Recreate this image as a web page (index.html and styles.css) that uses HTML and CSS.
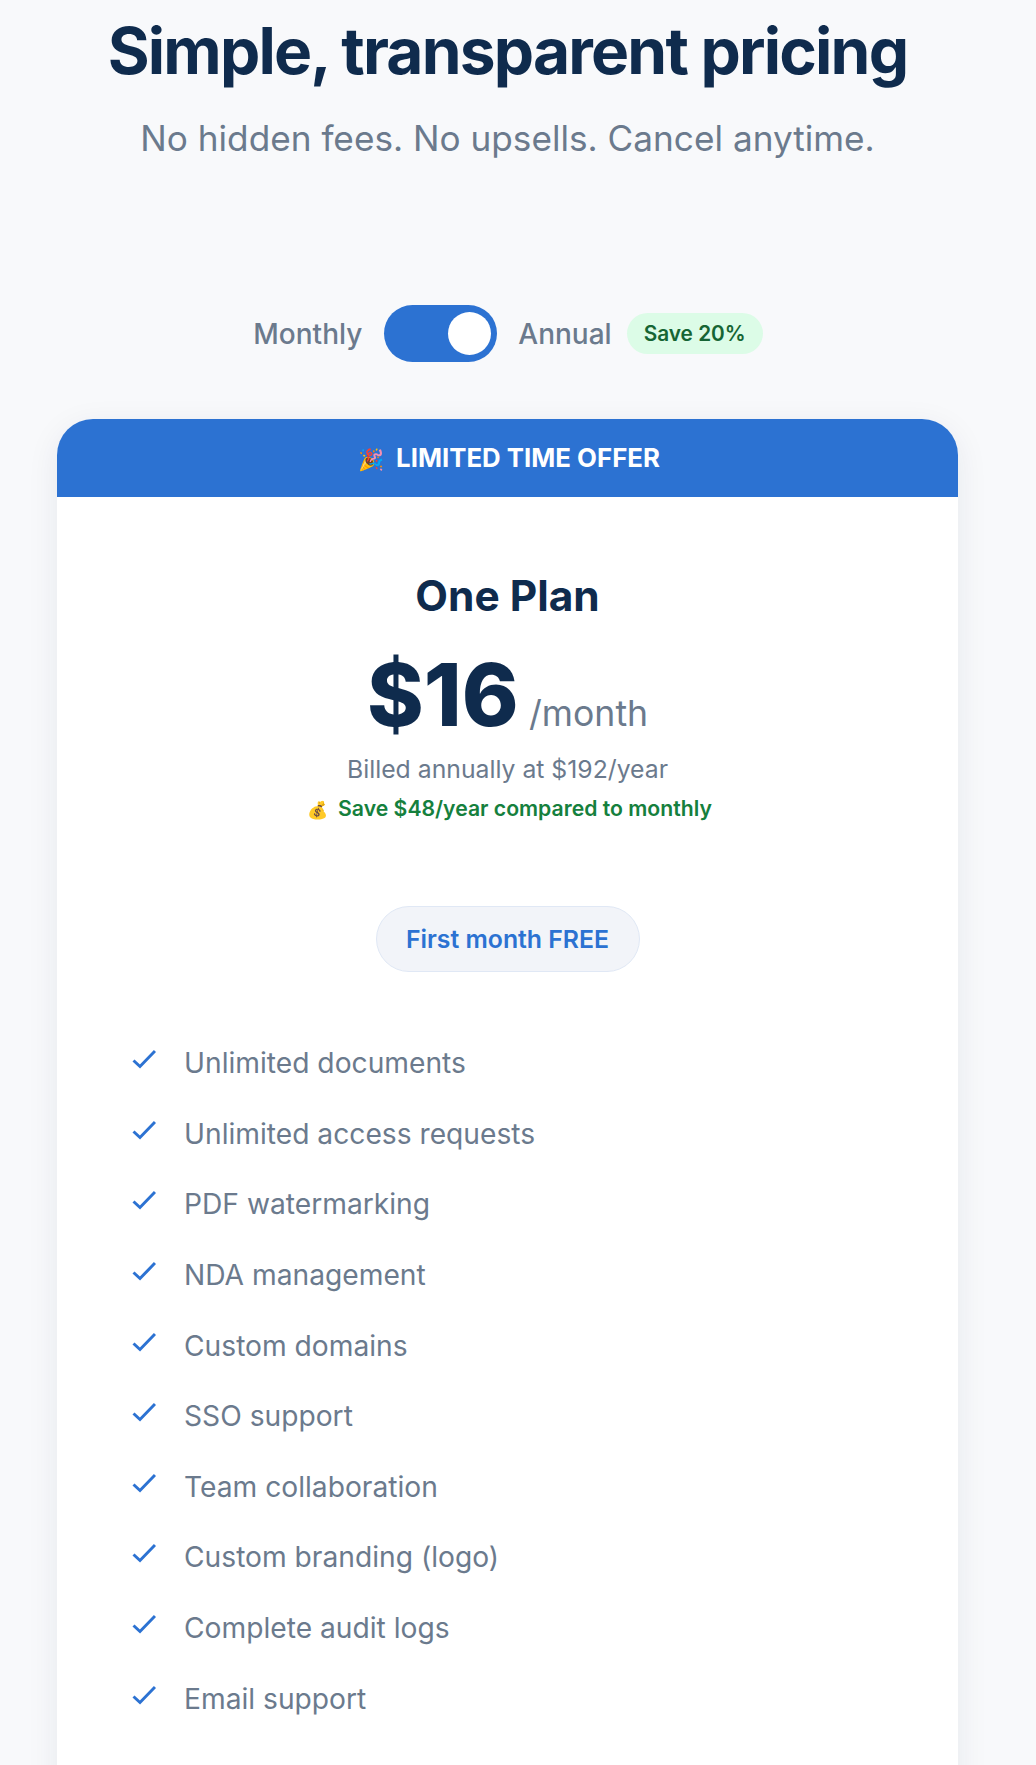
FILE: index.html
```html
<!DOCTYPE html>
<html lang="en">
<head>
    <meta charset="UTF-8">
    <meta name="viewport" content="width=device-width, initial-scale=1.0">
    <title>Simple, transparent pricing</title>
    <link rel="stylesheet" href="styles.css">
</head>
<body>

<div class="page">
    <header class="hero">
        <h1>Simple, transparent pricing</h1>
        <p>No hidden fees. No upsells. Cancel anytime.</p>
    </header>

    <div class="billing-toggle">
        <span class="toggle-label">Monthly</span>
        <span class="switch"><span class="knob"></span></span>
        <span class="toggle-label">Annual</span>
        <span class="save-badge">Save 20%</span>
    </div>

    <div class="card">
        <div class="offer"><span class="offer-emoji">🎉</span>LIMITED TIME OFFER</div>
        <div class="card-body">
            <h2>One Plan</h2>
            <div class="price"><span class="amount">$16</span> <span class="period">/month</span></div>
            <p class="billed">Billed annually at $192/year</p>
            <p class="savings"><span class="savings-emoji">💰</span>Save $48/year compared to monthly</p>
            <div class="free-pill">First month FREE</div>
            <ul class="features">
                <li><svg class="check" viewBox="0 0 24 20"><path d="M1.5 11.5 8 17.5 23 2"/></svg>Unlimited documents</li>
                <li><svg class="check" viewBox="0 0 24 20"><path d="M1.5 11.5 8 17.5 23 2"/></svg>Unlimited access requests</li>
                <li><svg class="check" viewBox="0 0 24 20"><path d="M1.5 11.5 8 17.5 23 2"/></svg>PDF watermarking</li>
                <li><svg class="check" viewBox="0 0 24 20"><path d="M1.5 11.5 8 17.5 23 2"/></svg>NDA management</li>
                <li><svg class="check" viewBox="0 0 24 20"><path d="M1.5 11.5 8 17.5 23 2"/></svg>Custom domains</li>
                <li><svg class="check" viewBox="0 0 24 20"><path d="M1.5 11.5 8 17.5 23 2"/></svg>SSO support</li>
                <li><svg class="check" viewBox="0 0 24 20"><path d="M1.5 11.5 8 17.5 23 2"/></svg>Team collaboration</li>
                <li><svg class="check" viewBox="0 0 24 20"><path d="M1.5 11.5 8 17.5 23 2"/></svg>Custom branding (logo)</li>
                <li><svg class="check" viewBox="0 0 24 20"><path d="M1.5 11.5 8 17.5 23 2"/></svg>Complete audit logs</li>
                <li><svg class="check" viewBox="0 0 24 20"><path d="M1.5 11.5 8 17.5 23 2"/></svg>Email support</li>
            </ul>
        </div>
    </div>
</div>

</body>
</html>
```

FILE: styles.css
```css
html, body {
    margin: 0;
    height: 1765px;
    overflow: hidden;
}
body {
    font-family: Inter, "Liberation Sans", sans-serif;
    background-color: #f8f9fb;
    color: #0f2b4d;
}
.page {
    width: 901px;
    margin-left: 57px;
}
.hero {
    text-align: center;
}
.hero h1 {
    margin: 0;
    padding-top: 15px;
    font-size: 64px;
    line-height: 72px;
    font-weight: 700;
    letter-spacing: -1.8px;
}
.hero p {
    margin: 27px 0 0;
    font-size: 35.2px;
    line-height: 48px;
    color: #6b7a8d;
}
.billing-toggle {
    display: flex;
    justify-content: center;
    align-items: center;
    gap: 22px;
    margin-top: 143px;
    padding-left: 1px;
}
.toggle-label {
    font-size: 28px;
    font-weight: 500;
    color: #6b7a8d;
}
.switch {
    display: flex;
    justify-content: flex-end;
    align-items: center;
    width: 113px;
    height: 57px;
    margin-right: -1px;
    padding: 0 6px;
    box-sizing: border-box;
    border-radius: 29px;
    background-color: #2c72d2;
}
.knob {
    width: 43px;
    height: 43px;
    border-radius: 50%;
    background-color: #fff;
}
.save-badge {
    margin-left: -7px;
    padding: 8px 17px;
    border-radius: 22px;
    background-color: #dcfce7;
    color: #166534;
    font-size: 20.8px;
    font-weight: 600;
}
.card {
    margin-top: 57px;
    border-radius: 36px 36px 0 0;
    background-color: #fff;
    box-shadow: 0 8px 32px rgba(15, 43, 77, 0.08);
}
.offer {
    height: 78px;
    line-height: 78px;
    border-radius: 36px 36px 0 0;
    background-color: #2c72d2;
    color: #fff;
    text-align: center;
    font-size: 25.8px;
    font-weight: 700;
}
.offer-emoji {
    margin: 0 12px 0 3px;
    font-size: 21px;
}
.card-body {
    padding: 75px 74px 200px;
    text-align: center;
}
.card-body h2 {
    margin: 0;
    font-size: 42.4px;
    line-height: 48px;
    font-weight: 700;
}
.price {
    margin-top: 27px;
}
.amount {
    font-size: 86px;
    line-height: 96px;
    font-weight: 800;
}
.period {
    margin-left: 6px;
    font-size: 35.6px;
    color: #6b7a8d;
}
.billed {
    margin: 8px 0 0;
    font-size: 24.75px;
    line-height: 36px;
    color: #6b7a8d;
}
.savings {
    margin: 5px 0 0;
    font-size: 21.2px;
    line-height: 32px;
    font-weight: 600;
    color: #15803d;
}
.savings-emoji {
    margin: 0 10px 0 4px;
    font-size: 17px;
}
.free-pill {
    width: 264px;
    height: 66px;
    margin: 80px auto 0;
    box-sizing: border-box;
    border: 1px solid #e0e8f5;
    border-radius: 33px;
    background-color: #f2f4f9;
    color: #2c72d2;
    font-size: 24.8px;
    font-weight: 600;
    line-height: 64px;
}
.features {
    margin: 56px 0 0;
    padding: 0;
    list-style: none;
    text-align: left;
}
.features li {
    display: flex;
    align-items: center;
    height: 70.6px;
    font-size: 28.2px;
    color: #6b7a8d;
}
.check {
    flex: none;
    width: 24px;
    height: 20px;
    margin: -8px 28px 0 1px;
    fill: none;
    stroke: #2c72d2;
    stroke-width: 3;
}
```
